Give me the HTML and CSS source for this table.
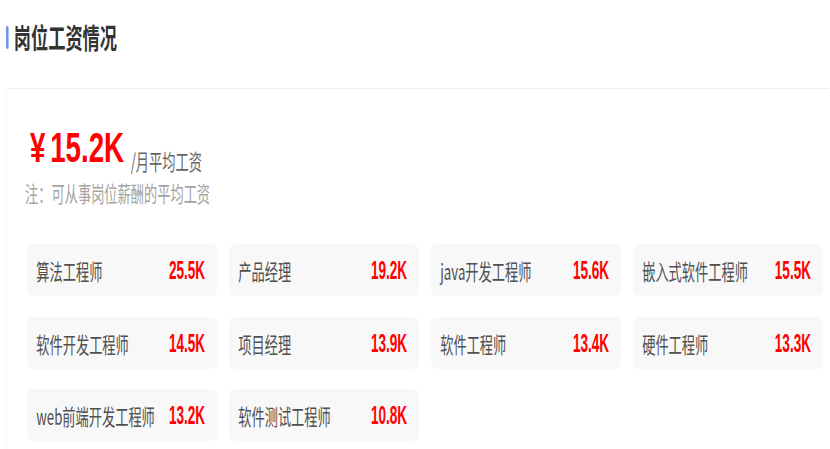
FILE: index.html
```html
<!DOCTYPE html>
<html lang="zh-CN">
<head>
<meta charset="utf-8">
<title>岗位工资情况</title>
<link rel="stylesheet" href="styles.css">
</head>
<body>
<div class="page">
  <header class="header">
    <span class="header-bar"></span>
    <h1 class="header-title"><span class="squeeze">岗位工资情况</span></h1>
  </header>
  <section class="panel">
    <div class="summary">
      <div class="summary-value"><span class="currency">¥</span>15.2K</div>
      <div class="summary-unit"><span class="squeeze">/月平均工资</span></div>
    </div>
    <p class="note"><span class="squeeze">注：可从事岗位薪酬的平均工资</span></p>
    <div class="grid">
      <div class="job"><span class="job-name">算法工程师</span><span class="job-pay">25.5K</span></div>
      <div class="job"><span class="job-name">产品经理</span><span class="job-pay">19.2K</span></div>
      <div class="job"><span class="job-name">java开发工程师</span><span class="job-pay">15.6K</span></div>
      <div class="job"><span class="job-name">嵌入式软件工程师</span><span class="job-pay">15.5K</span></div>
      <div class="job"><span class="job-name">软件开发工程师</span><span class="job-pay">14.5K</span></div>
      <div class="job"><span class="job-name">项目经理</span><span class="job-pay">13.9K</span></div>
      <div class="job"><span class="job-name">软件工程师</span><span class="job-pay">13.4K</span></div>
      <div class="job"><span class="job-name">硬件工程师</span><span class="job-pay">13.3K</span></div>
      <div class="job"><span class="job-name">web前端开发工程师</span><span class="job-pay">13.2K</span></div>
      <div class="job"><span class="job-name">软件测试工程师</span><span class="job-pay">10.8K</span></div>
    </div>
  </section>
</div>
</body>
</html>
```

FILE: styles.css
```css
html, body {
  margin: 0;
  padding: 0;
  background: #ffffff;
  overflow: hidden;
}

body {
  width: 830px;
  height: 449px;
  font-family: "Noto Sans CJK SC", "Noto Sans", sans-serif;
}

/* the whole sheet is drawn horizontally condensed */
.page {
  width: 1257px;
  transform: scaleX(0.66);
  transform-origin: 0 0;
}

.squeeze {
  display: inline-block;
  white-space: nowrap;
  transform: scaleX(0.91);
  transform-origin: left center;
}

.header {
  display: flex;
  align-items: center;
  gap: 8px;
  padding: 22px 0 0 9px;
  height: 30px;
}

.header-bar {
  width: 4px;
  height: 23px;
  border-radius: 2px;
  background: #6f97f0;
}

.header-title {
  margin: 0;
  font-size: 28px;
  line-height: 30px;
  font-weight: 700;
  color: #333333;
}

.header-title .squeeze {
  transform: scaleX(0.93);
}

.panel {
  margin: 36px 0 0 7.6px;
  padding: 34px 0 8px 28px;
  border-top: 1px solid #efefef;
  border-left: 2px solid #f2f2f2;
  border-top-left-radius: 5px;
}

.summary {
  display: flex;
  align-items: flex-end;
  gap: 10px;
  padding-left: 8px;
}

.summary-value {
  font-family: "Liberation Sans", Arial, sans-serif;
  font-weight: 700;
  font-size: 42px;
  line-height: 49px;
  color: #ff0000;
}

.currency {
  margin-right: 7px;
}

.summary-unit {
  font-size: 22px;
  line-height: 24px;
  color: #666666;
}

.note {
  margin: 8px 0 0 0;
  font-size: 22px;
  line-height: 24px;
  color: #a3a3a3;
}

.grid {
  display: grid;
  grid-template-columns: repeat(4, 288px);
  column-gap: 18px;
  row-gap: 20.5px;
  margin: 40px 0 0 3.7px;
}

.job {
  display: flex;
  align-items: center;
  justify-content: space-between;
  height: 52px;
  padding: 0 19px 0 14px;
  background: #f8f8f8;
  border-radius: 9px / 6px;
}

.job-name {
  display: inline-block;
  flex: 0 1 auto;
  min-width: 0;
  font-size: 22px;
  line-height: 24px;
  color: #505050;
  white-space: nowrap;
  transform: scaleX(0.91);
  transform-origin: left center;
}

.job-pay {
  display: inline-block;
  flex: 0 0 auto;
  margin-left: auto;
  font-family: "Liberation Sans", Arial, sans-serif;
  font-weight: 700;
  font-size: 25px;
  line-height: 24px;
  color: #ff0000;
  transform: scaleX(0.82);
  transform-origin: right center;
}
```
